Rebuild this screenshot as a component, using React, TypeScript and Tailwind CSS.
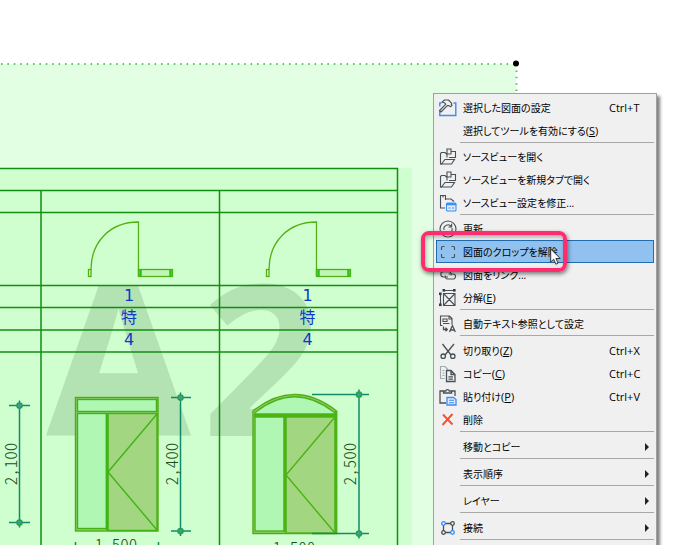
import type { ReactNode } from 'react'

type IconName =
  | 'settings'
  | 'open'
  | 'modify'
  | 'refresh'
  | 'crop'
  | 'link'
  | 'explode'
  | 'autotext'
  | 'cut'
  | 'copy'
  | 'paste'
  | 'delete'
  | 'connect'

interface MenuEntry {
  label: string
  icon?: IconName
  mnemonic?: string
  shortcut?: string
  submenu?: boolean
  active?: boolean
}

const TOP_GROUPS: MenuEntry[][] = [
  [
    { label: '選択した図面の設定', icon: 'settings', shortcut: 'Ctrl+T' },
    { label: '選択してツールを有効にする', mnemonic: 'S' },
  ],
  [
    { label: 'ソースビューを開く', icon: 'open' },
    { label: 'ソースビューを新規タブで開く', icon: 'open' },
    { label: 'ソースビュー設定を修正...', icon: 'modify' },
  ],
  [
    { label: '更新', icon: 'refresh' },
    { label: '図面のクロップを解除', icon: 'crop', active: true },
    { label: '図面をリンク...', icon: 'link' },
    { label: '分解', icon: 'explode', mnemonic: 'E' },
  ],
]

const EDIT_GROUPS: MenuEntry[][] = [
  [{ label: '自動テキスト参照として設定', icon: 'autotext' }],
  [
    { label: '切り取り', icon: 'cut', mnemonic: 'Z', shortcut: 'Ctrl+X' },
    { label: 'コピー', icon: 'copy', mnemonic: 'C', shortcut: 'Ctrl+C' },
    { label: '貼り付け', icon: 'paste', mnemonic: 'P', shortcut: 'Ctrl+V' },
    { label: '削除', icon: 'delete' },
  ],
  [{ label: '移動とコピー', submenu: true }],
  [{ label: '表示順序', submenu: true }],
  [{ label: 'レイヤー', submenu: true }],
  [{ label: '接続', icon: 'connect', submenu: true }],
]

const ICONS: Record<IconName, ReactNode> = {
  settings: (
    <>
      <path d="M.8 11v5.500h16V4h-2.300M.8 7.500V4h1.700" stroke="#3b8cf5" strokeWidth="1.4" />
      <path
        d="M.6 11.500 6.800 5.200 5.500 3.800 3 3.200 5.500 1h4l3.200 3.400-.4 1 .8 1-1.600 1.400-1.200-1-1-.2L8.300 6.600 2 13z"
        fill="#f0f0f0"
        strokeLinejoin="round"
      />
    </>
  ),
  open: (
    <>
      <path d="M3 16H1.500V5.500l1-1H6L7.500 6M8 9.500V1h4v2.500h4.500V9.500H10M12 3.500v2.500h-4" />
      <path d="M2.500 16 6 11.500h9.500L12.500 16z" />
    </>
  ),
  modify: (
    <>
      <path d="M6 14H1.500V1.500H6.500v4.500M4 1.500v2M6.500 5H12l3 2.500" />
      <rect x="7.500" y="9" width="9.500" height="8" rx="1" stroke="#3b8cf5" fill="#dcebff" />
      <path d="M7.500 10.200h9.500" stroke="#3b8cf5" strokeWidth="2.200" />
      <path d="M9.500 14h2M13 14h2" stroke="#3b8cf5" />
    </>
  ),
  refresh: (
    <>
      <circle cx="9" cy="9" r="8" />
      <path d="M5 9.800a4 4 0 0 1 7.300-3M12.600 3.800v3.200H9.500M13 8.200a4 4 0 0 1-7.300 3" />
    </>
  ),
  crop: <path d="M5.500 3.500H3.500a1 1 0 0 0-1 1V7M12.500 3.500h2a1 1 0 0 1 1 1V7M2.500 11v2.500a1 1 0 0 0 1 1h2M15.500 11v2.500a1 1 0 0 1-1 1h-2" />,
  link: (
    <>
      <path d="M9 11H4.500a2.700 2.700 0 0 1 0-5.400h5a2.700 2.700 0 0 1 2.500 3.800" />
      <path d="M9.500 8h4.500a2.500 2.500 0 0 1 0 5H9a2.500 2.500 0 0 1-2.600-3.500" />
    </>
  ),
  explode: (
    <>
      <path d="M4.500 4.500h11.500v12H4.500zM4.500 4.500l11.500 12M16 4.500l-11.500 12M1.500 4v12M5 1.500h10" />
      <g fill="#333c44" stroke="none">
        <rect x="0" y="3.500" width="2.600" height="2.600" />
        <rect x="0" y="14.500" width="2.600" height="2.600" />
        <rect x="3.500" y="0" width="2.600" height="2.600" />
        <rect x="14" y="0" width="2.600" height="2.600" />
      </g>
    </>
  ),
  autotext: (
    <>
      <path d="M3.500 10.500H1.500V1h9l2.500 2.500v6M10 1v3h3" />
      <path d="M4 4h4v2.500H4zM4 8.500h6.500" />
      <path d="M4.500 11.500v3H8M6.500 12.800 8.300 14.500 6.500 16.200M10.500 17l2.900-6.500 2.900 6.500M11.500 15h3.800" strokeWidth="1.300" />
    </>
  ),
  cut: (
    <>
      <path d="M3.500 2 12 13M15 2 6 13" strokeWidth="1.300" />
      <circle cx="4.200" cy="14.200" r="2.200" strokeWidth="1.300" />
      <circle cx="13.800" cy="14.200" r="2.200" strokeWidth="1.300" />
    </>
  ),
  copy: (
    <>
      <path d="M5.500 13.500H1.500v-12h4.500l3 3M3.500 5.500h2M3.500 8h2M3.500 10.500h2" stroke="#a2a8ac" />
      <path d="M7.500 5.500h4.500l4 4v7H7.500zM12 5.500v4h4M9.500 11.800h4.500M9.500 14.200h4.500" strokeWidth="1.300" />
    </>
  ),
  paste: (
    <>
      <path d="M7 15H1V3h3.500M12.500 3H16v5M4.500 5V3h2.300a1.800 1.800 0 0 1 3.500 0h2.300v2z" strokeWidth="1.300" />
      <path d="M8 9.500h6.500l2.500 2v5.500H8z" stroke="#3b8cf5" fill="#dcebff" strokeWidth="1.300" />
      <path d="M10 12.300h5M10 14.700h5" stroke="#3b8cf5" />
    </>
  ),
  delete: <path d="M4 3.500 13.500 13.500M13.500 3 3.500 14" stroke="#f4512c" strokeWidth="1.9" />,
  connect: (
    <>
      <path d="M6 4.500h6M4.500 6v6M13.500 6v6M6 13.500h6" strokeWidth="1.300" />
      <g fill="#f0f0f0" strokeWidth="1.300">
        <circle cx="4.500" cy="4.500" r="1.800" stroke="#3b8cf5" />
        <circle cx="13.500" cy="4.500" r="1.800" />
        <circle cx="4.500" cy="13.500" r="1.800" />
        <circle cx="13.500" cy="13.500" r="1.800" stroke="#3b8cf5" />
      </g>
    </>
  ),
}

function MenuIcon({ name }: { name: IconName }) {
  return (
    <svg viewBox="0 0 18 18" className="size-[18px]" fill="none" stroke="#465057" strokeWidth="1.1" aria-hidden="true">
      {ICONS[name]}
    </svg>
  )
}

function MenuRow({ entry }: { entry: MenuEntry }) {
  return (
    <button
      type="button"
      role="menuitem"
      className={`flex h-[23px] w-full items-center border pl-[2px] pr-1 text-left ${
        entry.active ? 'border-[#1f6cb0] bg-[#91c1ee]' : 'border-transparent'
      }`}
    >
      <span className="w-6 shrink-0">{entry.icon && <MenuIcon name={entry.icon} />}</span>
      <span className="flex-1 whitespace-nowrap [font-feature-settings:'palt']">
        {entry.label}
        {entry.mnemonic && (
          <span className="text-[11px]">
            (<u>{entry.mnemonic}</u>)
          </span>
        )}
      </span>
      {entry.shortcut && <span className="w-10 shrink-0 text-[11px]">{entry.shortcut}</span>}
      {entry.submenu && (
        <svg viewBox="0 0 4 8" className="h-2 w-1" fill="#222" aria-hidden="true">
          <path d="M0 0 4 4 0 8z" />
        </svg>
      )}
    </button>
  )
}

function Door({ x }: { x: number }) {
  return (
    <g transform={`translate(${x} 0)`} fill="none" stroke="#54b010" strokeWidth="1.300">
      <path d="M91 269.500C91 242 110 222 138.500 222V276" />
      <rect x="88.500" y="269.500" width="2.500" height="7" />
      <rect x="138.500" y="269.500" width="34" height="7" fill="#c0f5b8" />
      <path d="M140.500 269.500v7M170.500 269.500v7" stroke="#1fc41f" strokeWidth="2.500" />
    </g>
  )
}

interface DimensionProps {
  x: number
  top: number
  bottom: number
  label: string
  left: number
  right: number
}

function Dimension({ x, top, bottom, label, left, right }: DimensionProps) {
  return (
    <g stroke="#128a6a" strokeWidth="1.500">
      <path d={`M${x} ${top - 5}V${bottom + 5}M${left} ${top}H${right}M${left} ${bottom}H${right}`} />
      {[top, bottom].map((y) => (
        <circle key={y} cx={x} cy={y} r="2.600" fill="#4e90a8" stroke="#1fa44a" />
      ))}
      <text
        transform={`translate(${x - 3} 464) rotate(-90)`}
        textAnchor="middle"
        stroke="none"
        fill="#1b4d1b"
        className="font-['Noto_Sans_CJK_JP',sans-serif] text-[17px] font-light [font-feature-settings:'hwid']"
      >
        {label}
      </text>
    </g>
  )
}

const ROW_LINES = [168.5, 190.5, 212.5, 285.5, 307.5, 330, 352]

function Drawing() {
  return (
    <svg width="700" height="545" viewBox="0 0 700 545" className="block max-w-none" role="img" aria-label="建具表">
      <rect x="0" y="64" width="516" height="481" fill="#e3ffe3" />
      <rect x="0" y="168" width="412" height="377" fill="#cfffcf" />
      <text x="46 202" y="436" fill="#b3e2b3" className="font-['Open_Sans',sans-serif] text-[210px] font-bold">
        A2
      </text>

      <path d="M1 64H516M516.500 64V545" fill="none" stroke="#5fc05f" strokeWidth="2" strokeDasharray="1.500 4.900" />
      <circle cx="516" cy="63.500" r="3" fill="#000" />

      <g stroke="#128f12" strokeWidth="1.500">
        {ROW_LINES.map((y) => (
          <path key={y} d={`M0 ${y}H398`} />
        ))}
        <path d="M41 190.500V545M219.500 190.500V545M397.500 168V545" />
      </g>

      <Door x={0} />
      <Door x={178} />

      <g fill="#1038c8" textAnchor="middle" className="font-['Noto_Sans_CJK_JP',sans-serif] text-[16px]">
        {[129, 307.5].map((x) => (
          <g key={x}>
            <text x={x} y="301" className="font-['DejaVu_Sans',sans-serif]">1</text>
            <text x={x} y="323">特</text>
            <text x={x} y="345" className="font-['DejaVu_Sans',sans-serif]">4</text>
          </g>
        ))}
      </g>

      {/* rectangular door */}
      <g fill="none" stroke="#3fb414" strokeWidth="1.400">
        <rect x="75.500" y="397.500" width="82.500" height="133.500" fill="#8fd27a" stroke="#58a812" />
        <rect x="77.500" y="399.500" width="79" height="12" fill="#b0f7b4" />
        <rect x="77.500" y="413.500" width="29" height="115" fill="#b0f7b4" />
        <rect x="108" y="413.500" width="49" height="117" fill="#a2d681" />
        <path d="M107 413V530" strokeWidth="2.500" />
        <path d="M157 414 108 472 157 530" />
      </g>

      {/* arched door */}
      <g fill="none" stroke="#4bb414" strokeWidth="1.400">
        <path d="M253 533.500V411Q294.500 378 336.500 411V533.500z" fill="#8fd27a" stroke="#58a812" />
        <path d="M255 414V412.500Q294.500 381 334.500 412.500V414z" fill="#b0f7b4" />
        <path d="M254 415.500H336" strokeWidth="3" />
        <rect x="255" y="417" width="29" height="114" fill="#b0f7b4" />
        <rect x="286" y="417" width="49" height="116" fill="#a2d681" />
        <path d="M285 416V532M336 411V533" strokeWidth="2.500" />
        <path d="M335 417 286 475 335 533" />
      </g>

      <Dimension x={19.5} top={405.5} bottom={522.5} label="2,100" left={9} right={30} />
      <Dimension x={180.5} top={397.5} bottom={531} label="2,400" left={171} right={191} />
      <Dimension x={359} top={394.5} bottom={533.5} label="2,500" left={312} right={369} />

      <path d="M75.500 542v3M158.500 542v3" stroke="#128a55" strokeWidth="1.500" />
      <g
        fill="#1b4d1b"
        textAnchor="middle"
        className="font-['Noto_Sans_CJK_JP',sans-serif] text-[17px] font-light [font-feature-settings:'hwid']"
      >
        <text x="116" y="551">1,500</text>
        <text x="294" y="554">1,500</text>
      </g>
    </svg>
  )
}

function ContextMenu() {
  return (
    <div
      role="menu"
      className="absolute left-[433px] top-[93px] w-56 border border-[#a0a0a0] bg-[#f0f0f0] px-[2px] pb-12 pt-[2px] font-['Open_Sans','Noto_Sans_CJK_JP',sans-serif] text-[10px] leading-4 text-black shadow-[3px_3px_3px_rgba(0,0,0,0.5)]"
    >
      {TOP_GROUPS.map((group) => (
        <div key={group[0].label}>
          {group.map((entry) => (
            <MenuRow key={entry.label} entry={entry} />
          ))}
          <div role="separator" className="ml-6 h-[3px] border-t border-[#a8a8a8]" />
        </div>
      ))}
      {EDIT_GROUPS.map((group) => (
        <div key={group[0].label}>
          {group.map((entry) => (
            <MenuRow key={entry.label} entry={entry} />
          ))}
          <div role="separator" className="ml-6 h-1 border-t border-[#a8a8a8]" />
        </div>
      ))}
    </div>
  )
}

export default function App() {
  return (
    <main className="relative h-screen overflow-hidden bg-white">
      <Drawing />
      <ContextMenu />
      <div className="pointer-events-none absolute left-[421px] top-[231px] h-[41px] w-[146px] rounded-lg border-4 border-[#ff2d6f] shadow-[1px_2px_4px_rgba(0,0,0,0.5),inset_1px_2px_4px_rgba(0,0,0,0.3)]" />
      <svg
        viewBox="0 0 12 18"
        className="pointer-events-none absolute left-[550px] top-[248px] h-[18px] w-3 drop-shadow-sm"
        aria-hidden="true"
      >
        <path d="M.7 1v13l3-2.800 2.200 5 2.200-1-2.200-4.700h4.300z" fill="#fff" stroke="#222" strokeWidth=".9" />
      </svg>
    </main>
  )
}
